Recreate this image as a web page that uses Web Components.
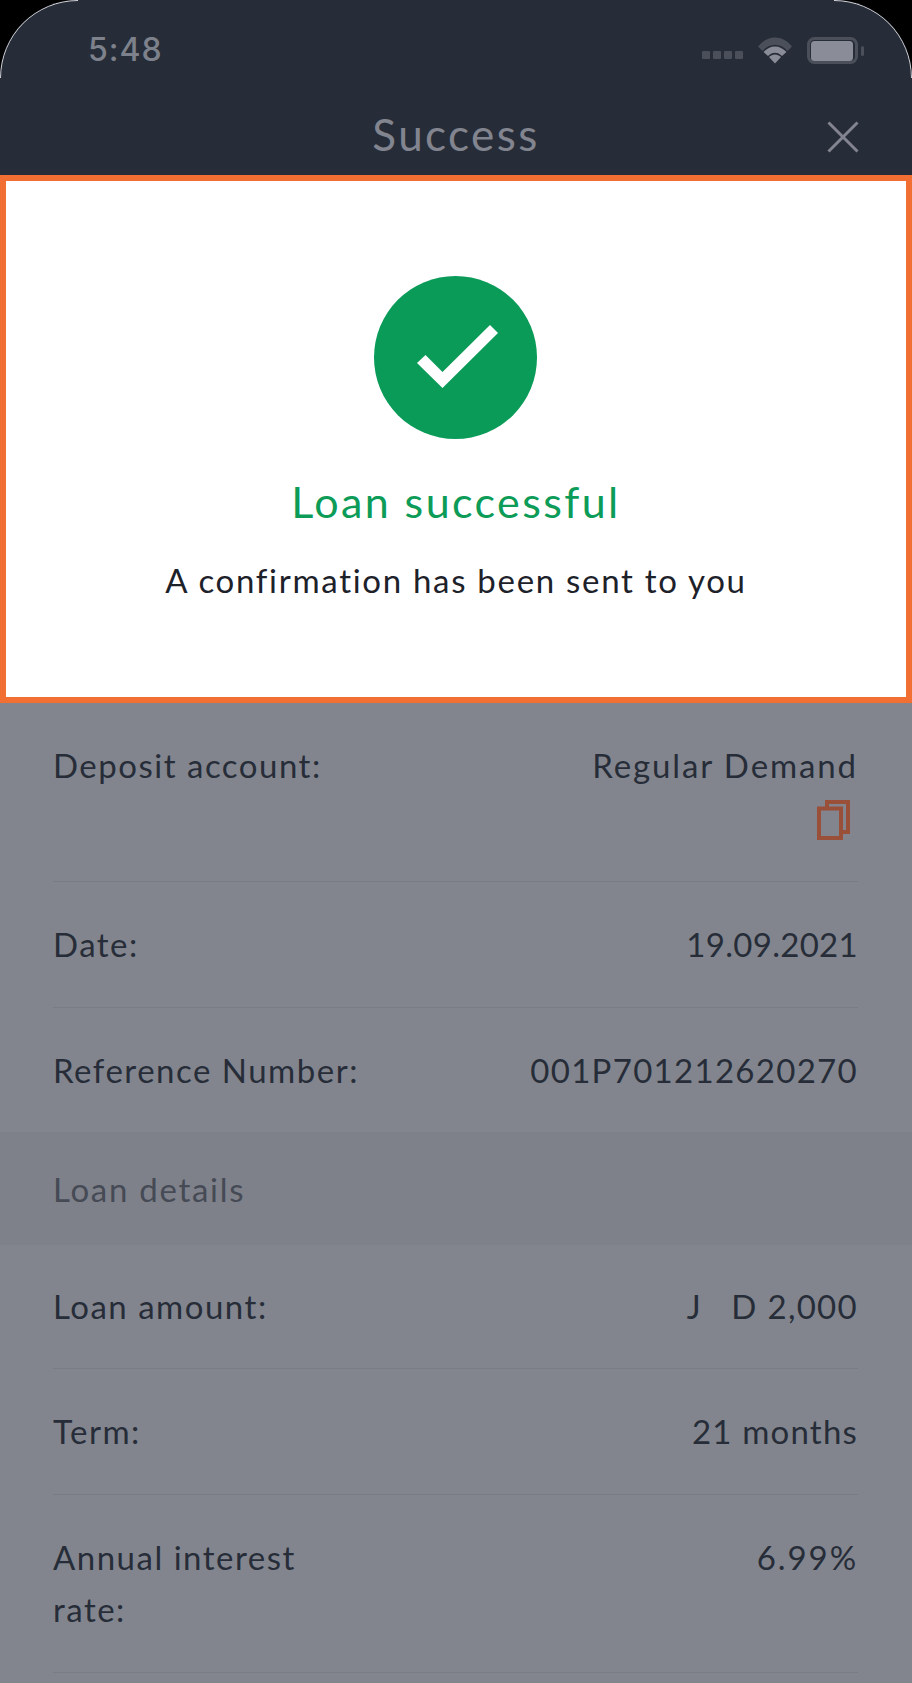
<!DOCTYPE html>
<html lang="en">
<head>
<meta charset="utf-8">
<title>Success</title>
<style>
  html, body { margin: 0; height: 1683px; background: #000; overflow: hidden; }
  body { font-family: "Lato", "Liberation Sans", sans-serif; }
</style>
</head>
<body>
<phone-screen>
  <nav-header title="Success"></nav-header>
  <success-panel heading="Loan successful" message="A confirmation has been sent to you"></success-panel>
  <detail-row height="179" label="Deposit account:" value="Regular Demand"><copy-icon></copy-icon></detail-row>
  <detail-row spacing="0.3" label="Date:" value="19.09.2021"></detail-row>
  <detail-row spacing="1.3" height="124" label="Reference Number:" value="001P701212620270" plain></detail-row>
  <section-heading>Loan details</section-heading>
  <detail-row spacing="1.3" pad="35" height="124" label="Loan amount:" value="J   D 2,000"></detail-row>
  <detail-row spacing="1.2" label="Term:" value="21 months"></detail-row>
  <detail-row height="178" label="Annual interest rate:" value="6.99%"></detail-row>
</phone-screen>

<script>
class CopyIcon extends HTMLElement {
  constructor() {
    super();
    this.attachShadow({ mode: 'open' });
    this.shadowRoot.innerHTML = `
      <style>
        :host { display: block; width: 33px; height: 40px; }
        svg { display: block; }
      </style>
      <svg width="33" height="40" viewBox="0 0 33 40" fill="none" stroke="#994f38" stroke-width="4">
        <path d="M10 8V2H31V32H24"/>
        <rect x="2" y="8.5" width="22" height="29.500"/>
      </svg>
    `;
  }
}

class PhoneScreen extends HTMLElement {
  constructor() {
    super();
    this.attachShadow({ mode: 'open' });
    this.shadowRoot.innerHTML = `
      <style>
        :host {
          display: flex;
          flex-direction: column;
          position: relative;
          width: 912px;
          height: 1683px;
          background: #82858e;
          border-radius: 78px 78px 0 0;
          overflow: hidden;
        }
        .edge { position: absolute; left: 0; top: 0; pointer-events: none; }
      </style>
      <slot></slot>
      <svg class="edge" width="912" height="80" viewBox="0 0 912 80" fill="none" stroke="#d8d9dc" stroke-width="1">
        <path d="M0.5 78A77.5 77.5 0 0 1 78 0.5"/>
        <path d="M834 0.5A77.5 77.5 0 0 1 911.5 78"/>
      </svg>
    `;
  }
}

class NavHeader extends HTMLElement {
  constructor() {
    super();
    this.attachShadow({ mode: 'open' });
  }

  connectedCallback() {
    this.shadowRoot.innerHTML = `
      <style>
        :host { display: block; background: #272d38; height: 175px; color: #82858f; }
        .status { display: flex; align-items: center; height: 100px; padding: 0 48px 0 88px; }
        .time { font: 500 32px/1 "Inter", sans-serif; letter-spacing: 1px; color: #7d818b; flex: 1; }
        .icons { display: flex; align-items: center; }
        .dots { display: flex; gap: 3px; margin: 9px 15px 0 0; }
        .dots i { width: 8px; height: 8px; border-radius: 1px; background: #4a4f5a; }
        .title-row { display: flex; align-items: center; justify-content: center; position: relative; height: 67px; }
        .title { font-size: 44px; letter-spacing: 2.4px; font-weight: 400; }
        .close { position: absolute; right: 53px; top: 21px; }
        svg { display: block; }
      </style>
      <div class="status">
        <span class="time">5:48</span>
        <div class="icons">
          <div class="dots"><i></i><i></i><i></i><i></i></div>
          <svg width="34" height="27" viewBox="0 0 34 27" style="margin-right:15px">
            <path d="M0 9.5C9.5 -2.5 24.5 -2.5 34 9.5L29.5 14C22.5 5.5 11.5 5.5 4.5 14Z" fill="#4a4f5a"/>
            <path d="M5.5 15C12 7.5 22 7.5 28.5 15L24 19C20 14.5 14 14.5 10 19Z" fill="#8a8c97"/>
            <path d="M11 20C14.5 16.5 19.5 16.5 23 20L17 26.5Z" fill="#8a8c97"/>
          </svg>
          <svg width="57" height="27" viewBox="0 0 57 27">
            <rect x="1.5" y="1.5" width="48" height="24" rx="6" fill="none" stroke="#4a4f5a" stroke-width="3"/>
            <rect x="4" y="4" width="42" height="20" rx="3.5" fill="#8a8c97"/>
            <rect x="54" y="9" width="3" height="10" rx="1.5" fill="#4a4f5a"/>
          </svg>
        </div>
      </div>
      <div class="title-row">
        <span class="title">${this.getAttribute('title')}</span>
        <svg class="close" width="32" height="32" viewBox="0 0 32 32">
          <path d="M1.5 1.5L30.5 30.5M30.5 1.5L1.5 30.5" stroke="#82858f" stroke-width="3" fill="none"/>
        </svg>
      </div>
    `;
  }
}

class SuccessPanel extends HTMLElement {
  constructor() {
    super();
    this.attachShadow({ mode: 'open' });
  }

  connectedCallback() {
    this.shadowRoot.innerHTML = `
      <style>
        :host {
          display: flex;
          flex-direction: column;
          align-items: center;
          box-sizing: border-box;
          height: 528px;
          padding-top: 95px;
          background: #fff;
          border: 6px solid #f26f33;
          text-align: center;
        }
        svg { display: block; margin-left: -2px; }
        h1 { margin: 35px 0 0; font-size: 43px; line-height: 56px; font-weight: 400; letter-spacing: 2.4px; color: #0c9c58; }
        p { margin: 28px 0 0; font-size: 33px; line-height: 44px; letter-spacing: 1.7px; color: #1d2129; }
      </style>
      <svg width="163" height="163" viewBox="0 0 163 163">
        <circle cx="81.5" cy="81.5" r="81.5" fill="#0b9b59"/>
        <path d="M43 87L51.5 79L68.5 96L116 49L124 57L68.5 112Z" fill="#fff"/>
      </svg>
      <h1>${this.getAttribute('heading')}</h1>
      <p>${this.getAttribute('message')}</p>
    `;
  }
}

class DetailRow extends HTMLElement {
  constructor() {
    super();
    this.attachShadow({ mode: 'open' });
  }

  connectedCallback() {
    const height = this.getAttribute('height') || 126;
    const pad = this.getAttribute('pad') || 36;
    const spacing = this.getAttribute('spacing') || 1.9;
    const border = this.hasAttribute('plain') ? 0 : 1;
    this.shadowRoot.innerHTML = `
      <style>
        :host { display: block; padding: 0 54px 0 53px; font-size: 33px; line-height: 52px; color: #272d38; }
        .row {
          display: flex;
          justify-content: space-between;
          box-sizing: border-box;
          height: ${height}px;
          padding-top: ${pad}px;
          border-bottom: ${border}px solid #797c86;
        }
        .label { width: 320px; letter-spacing: 1.5px; }
        .value { display: flex; flex-direction: column; align-items: flex-end; }
        .text { white-space: pre; letter-spacing: ${spacing}px; }
        .extra { margin: 9px 8px 0 0; }
      </style>
      <div class="row">
        <span class="label">${this.getAttribute('label')}</span>
        <div class="value"><span class="text">${this.getAttribute('value')}</span><div class="extra"><slot></slot></div></div>
      </div>
    `;
  }
}

class SectionHeading extends HTMLElement {
  constructor() {
    super();
    this.attachShadow({ mode: 'open' });
    this.shadowRoot.innerHTML = `
      <style>
        :host {
          display: flex;
          align-items: center;
          box-sizing: border-box;
          height: 113px;
          padding: 0 53px;
          background: #7e818a;
          font-size: 33px;
          letter-spacing: 1.7px;
          color: #454a55;
        }
      </style>
      <slot></slot>
    `;
  }
}

customElements.define('copy-icon', CopyIcon);
customElements.define('phone-screen', PhoneScreen);
customElements.define('nav-header', NavHeader);
customElements.define('success-panel', SuccessPanel);
customElements.define('detail-row', DetailRow);
customElements.define('section-heading', SectionHeading);
</script>
</body>
</html>
